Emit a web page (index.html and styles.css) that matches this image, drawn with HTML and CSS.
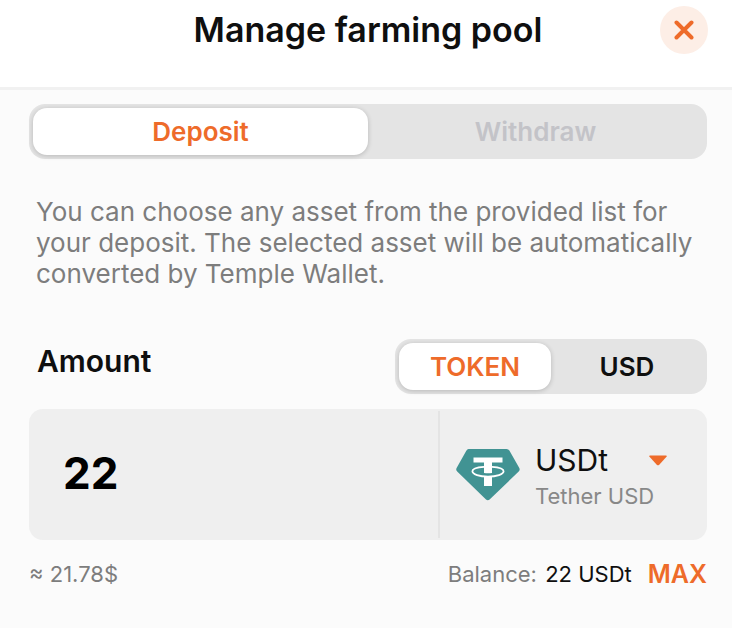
FILE: index.html
```html
<!DOCTYPE html>
<html lang="en">
<head>
    <meta charset="UTF-8">
    <meta name="viewport" content="width=device-width, initial-scale=1">
    <title>Manage farming pool</title>
    <link rel="stylesheet" href="styles.css">
</head>
<body>
<header class="header">
    <h1>Manage farming pool</h1>
    <button type="button" class="close" aria-label="Close">
        <svg width="20" height="20" viewBox="0 0 20 20"><path d="M2.500 2.500l15 15M17.500 2.500l-15 15"/></svg>
    </button>
</header>
<main class="content">
    <div class="segment tabs">
        <button type="button" class="active">Deposit</button>
        <button type="button" disabled>Withdraw</button>
    </div>
    <p class="description">You can choose any asset from the provided list for your deposit. The selected asset will be automatically converted by Temple Wallet.</p>
    <div class="amount_head">
        <label for="amount">Amount</label>
        <div class="segment units">
            <button type="button" class="active">TOKEN</button>
            <button type="button">USD</button>
        </div>
    </div>
    <div class="amount_box">
        <input type="text" id="amount" name="amount" inputmode="decimal" value="22">
        <button type="button" class="asset">
            <svg class="logo" width="64" height="52" viewBox="0 0 64 52">
                <path fill="#419393" d="M12.500 0H50.500Q52.500 0 53.500 1.800L63.300 19Q64.300 21 62.700 22.600L33.600 50.500Q31.800 52 30 50.500L1.200 22.600Q-.4 21 .6 19L10.300 1.800Q11.300 0 12.500 0Z"/>
                <path fill="#fff" d="M17.500 8.500H46.500V13.500H36V24Q32 24.500 28 24V13.500H17.500ZM28 27.500H36V37H28Z"/>
                <path fill="none" stroke="#fff" stroke-width="1.800" d="M28 17.800C21 18.200 16.400 20 16.400 22.300C16.400 25.300 23.400 27.600 32 27.600S47.600 25.300 47.600 22.300C47.600 20 43 18.200 36 17.800"/>
            </svg>
            <span class="names">
                <span class="symbol">USDt</span>
                <span class="name">Tether USD</span>
            </span>
            <svg class="arrow" width="18" height="11" viewBox="0 0 18 11"><path d="M1 .5H17Q18.300 .8 17.500 1.800L10 9.900Q9 10.800 8 9.900L.5 1.800Q-.3 .8 1 .5Z"/></svg>
        </button>
    </div>
    <div class="summary">
        <span>≈ 21.78$</span>
        <span class="balance">Balance: <b>22 USDt</b></span>
        <button type="button" class="max">MAX</button>
    </div>
</main>
</body>
</html>
```
FILE: styles.css
```css
* {
    box-sizing: border-box;
}
body {
    margin: 0;
    background: #fbfbfb;
    color: #0f0f0f;
    font-family: Inter, "Liberation Sans", sans-serif;
}
button {
    margin: 0;
    padding: 0;
    border: none;
    background: none;
    color: inherit;
    font: inherit;
    cursor: pointer;
}
.header {
    display: grid;
    grid-template-columns: 48px 1fr 48px;
    align-items: center;
    padding: 6px 24px 33px 28px;
    background: #fff;
    border-bottom: 3px solid #f1f1f1;
}
.header h1 {
    grid-column: 2;
    margin: 0;
    font-size: 34px;
    font-weight: 600;
    line-height: 48px;
    text-align: center;
}
.close {
    display: grid;
    place-items: center;
    width: 48px;
    height: 48px;
    border-radius: 50%;
    background: #fdeee6;
}
.close svg {
    fill: none;
    stroke: #ee6b2a;
    stroke-width: 4;
    stroke-linecap: round;
}
.content {
    padding: 14px 25px 24px 29px;
}
.segment {
    display: grid;
    grid-template-columns: 1fr 1fr;
    padding: 4px;
    border-radius: 16px;
    background: #e4e4e4;
    font-size: 26px;
    font-weight: 600;
    line-height: 47px;
}
.segment button {
    border-radius: 14px;
}
.segment .active {
    background: #fff;
    color: #ee6b2a;
    box-shadow: 0 1px 5px rgba(0, 0, 0, .2);
}
.segment button:disabled {
    color: #c3c3c8;
}
.description {
    margin: 37px 7px 50px;
    color: #7d7d7d;
    font-size: 26px;
    line-height: 31px;
}
.amount_head {
    display: flex;
    justify-content: space-between;
    margin-bottom: 15px;
    padding-left: 8px;
    font-size: 30px;
    font-weight: 600;
    line-height: 44px;
}
.units {
    width: 312px;
}
.amount_box {
    display: flex;
    height: 131px;
    border-radius: 14px;
    background: #efefef;
}
.amount_box input {
    flex: 1;
    min-width: 0;
    padding: 0 34px 4px;
    border: none;
    background: none;
    color: #000;
    font: 700 44px Inter, "Liberation Sans", sans-serif;
}
.asset {
    display: flex;
    align-items: center;
    width: 269px;
    margin: 2px 0;
    padding: 0 40px 0 16px;
    border-left: 2px solid #e4e4e4;
    text-align: left;
    white-space: nowrap;
}
.names {
    display: grid;
    margin: 2px 0 0 15px;
}
.symbol {
    font-size: 30px;
    line-height: 40px;
}
.name {
    color: #888;
    font-size: 22px;
    line-height: 32px;
}
.arrow {
    align-self: flex-start;
    margin: 44px 0 0 auto;
    flex: none;
    fill: #ee6b2a;
}
.names {
    width: 112px;
}
.summary {
    display: flex;
    align-items: center;
    margin-top: 18px;
    color: #7d7d7d;
    font-size: 22px;
    line-height: 32px;
}
.balance {
    margin-left: auto;
}
.balance b {
    margin-left: 2px;
    color: #0f0f0f;
    font-weight: 400;
}
.max {
    margin-left: 16px;
    color: #ee6b2a;
    font-size: 25px;
    font-weight: 600;
}
```
